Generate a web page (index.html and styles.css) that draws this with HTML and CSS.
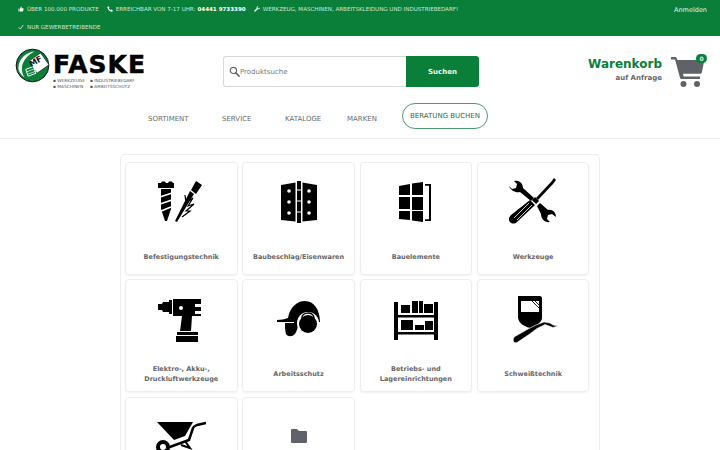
FILE: index.html
```html
<!DOCTYPE html>
<html lang="de">
<head>
<meta charset="utf-8">
<title>Faske</title>
<link rel="stylesheet" href="styles.css">
</head>
<body>
<div class="topbar">
  <div class="usp">
    <span class="usp-item"><svg class="ti" viewBox="0 0 12 12"><path d="M1 5.500h2.200V11H1zM4 5.500 6 1.200c.9 0 1.400.7 1.200 1.600L6.900 4.500h3.200c.8 0 1.200.7 1 1.400l-1 4.200c-.1.500-.5.900-1.100.9H4z"/></svg>ÜBER 100.000 PRODUKTE</span>
    <span class="usp-item"><svg class="ti" viewBox="0 0 12 12"><path d="M1.500 1 4 .8l1 2.800-1.300 1.100a7 7 0 0 0 3.600 3.600L8.400 7l2.800 1 .1 2.500C11 11.200 10 11.500 9 11.300 4.800 10.400 1.600 7.200.8 3 .6 2 .8 1.300 1.500 1z"/></svg>ERREICHBAR VON 7-17 UHR: <b>04441 9733390</b></span>
    <span class="usp-item"><svg class="ti" viewBox="0 0 12 12"><path d="M11.300 3.200 9.500 5 7.500 4.500 7 2.500 8.800.7C7.300.2 5.600 1 5.200 2.500c-.2.600-.1 1.300.1 1.900L.8 8.900c-.6.600-.6 1.500 0 2.100s1.500.6 2.100 0l4.500-4.500c1.900.6 4.200-.6 4.200-2.700 0-.2-.1-.4-.3-.6z"/></svg>WERKZEUG, MASCHINEN, ARBEITSKLEIDUNG UND INDUSTRIEBEDARF!</span>
    <span class="usp-item"><svg class="ti" viewBox="0 0 12 12"><path class="tick" d="M1.500 6.500 4.500 10 10.500 2"/></svg>NUR GEWERBETREIBENDE</span>
  </div>
  <a class="login"><span class="login-dot"></span>Anmelden</a>
</div>

<header class="header">
  <div class="logo">
    <svg class="logo-mark" viewBox="0 0 36 36">
      <circle cx="18" cy="18" r="16.800" fill="#0a7f3a" stroke="#111" stroke-width="1"/>
      <path d="M3.500 20C4 11 11 4.500 20 3.500 13 7 8 13 7 20c0 4 1 8 3 10-4-2-6.500-6-6.500-10z" fill="#fff"/>
      <rect x="17" y="8" width="15" height="15" fill="#fff" stroke="#111" stroke-width=".6" transform="rotate(-35 24.500 15.500)"/>
      <path d="M11 22l8-3 2.500 7-8 3z" fill="none" stroke="#fff" stroke-width="1"/>
      <path d="M12 24.500l8-3M13 27l8-3" stroke="#fff" stroke-width=".7"/>
    </svg>
    <div class="logo-mf">MF</div>
    <div class="logo-text">
      <div class="logo-name">FASKE</div>
      <div class="logo-tags">
        <span>WERKZEUGE</span><span>INDUSTRIEBEDARF</span>
        <span>MASCHINEN</span><span>ARBEITSSCHUTZ</span>
      </div>
    </div>
  </div>
  <form class="search">
    <div class="search-field">
      <svg class="search-icon" viewBox="0 0 12 12"><circle cx="4.800" cy="4.800" r="3.400" fill="none" stroke="#666" stroke-width="1.300"/><path d="M7.500 7.500 11 11" stroke="#666" stroke-width="1.700" stroke-linecap="round"/></svg>
      <span>Produktsuche</span>
    </div>
    <div class="search-btn">Suchen</div>
  </form>
  <div class="cart">
    <div class="cart-text">
      <div class="cart-title">Warenkorb</div>
      <div class="cart-sub">auf Anfrage</div>
    </div>
    <div class="cart-icon">
      <svg viewBox="0 0 36 34"><path d="M1 2h5l1.500 3H33c1 0 1.300.6 1.100 1.500l-2.300 11c-.2.800-.7 1.300-1.600 1.300H13l.6 2.700H30v2.500H11.500c-.8 0-1.300-.4-1.500-1.200L5 4.500H1z" fill="#5f6268"/><circle cx="13.500" cy="29" r="3" fill="#5f6268"/><circle cx="27" cy="29" r="3" fill="#5f6268"/></svg>
      <span class="cart-badge">0</span>
    </div>
  </div>
</header>

<nav class="nav">
  <a class="nav-link n1">SORTIMENT</a>
  <a class="nav-link n2">SERVICE</a>
  <a class="nav-link n3">KATALOGE</a>
  <a class="nav-link n4">MARKEN</a>
  <a class="nav-pill">BERATUNG BUCHEN</a>
</nav>

<main class="panel">
  <div class="grid">
    <a class="card"><svg class="icon" viewBox="0 0 50 50">
      <path d="M2 6h3l1-1.500h3L10 6h2l1-1.500h3L17 6h1v5H2z"/><path d="M5 12h10v20l-4 12H9L5 32z"/><path d="M4 20l12-4M4 27l12-4M5 34l10-4" stroke="#fff" stroke-width="1.600"/>
      <path d="M40 4l6 4-6 9-5-4z"/><path d="M34 14l4 3-17 28-2-1z"/><path d="M29 18l1 8 7-5-5 8 6-2-8 7 4 0-8 6" fill="none" stroke="#000" stroke-width="1.200"/>
    </svg><span class="label">Befestigungstechnik</span></a>

    <a class="card"><svg class="icon" viewBox="0 0 50 50">
      <path d="M7 8l14.500-2.500v39L7 43z"/><path d="M43 8l-14.500-2.500v39L43 43z"/><path d="M23 4h4v42h-4z"/>
      <path d="M23 13h4M23 24h4M23 35h4" stroke="#fff" stroke-width="1.200"/>
      <g fill="#fff"><circle cx="15" cy="14" r="1.800"/><circle cx="15" cy="25" r="1.800"/><circle cx="15" cy="36" r="1.800"/><circle cx="35" cy="14" r="1.800"/><circle cx="35" cy="25" r="1.800"/><circle cx="35" cy="36" r="1.800"/></g>
    </svg><span class="label">Baubeschlag/Eisenwaren</span></a>

    <a class="card"><svg class="icon" viewBox="0 0 50 50">
      <path d="M8 9l11-2v11H8zM21 6.500 32 5v13H21zM8 20h11v12H8zM21 20h11v13H21zM8 34h11v9L8 42zM21 34h11v11l-11-1.500z"/><path d="M34 7h6v37h-6v-1.800h4V8.800h-4z"/>
    </svg><span class="label">Bauelemente</span></a>

    <a class="card"><svg class="icon" viewBox="0 0 50 50">
      <path d="M1 9l3 3 4-1 1-4-3-3c5-1 9 2 9 7l11 10-3 3L12 15C8 16 3 14 1 9z"/><path d="M29 29l3-3 8 7c4-1 8 2 8 7l-4-3-4 1-1 4 3 3c-5 1-9-3-9-8z"/>
      <path d="M46 1l2 2-3 4-15 16-2-2 15-16z"/><path d="M27 20l4 4-3 3-4-4z"/><path d="M22 23l5 5L9 45c-2 2-5 2-7 0s-1-5 1-7z"/><path d="M6 41 21 26M9 43 24 28" stroke="#fff" stroke-width=".8"/>
    </svg><span class="label">Werkzeuge</span></a>

    <a class="card"><svg class="icon" viewBox="0 0 50 50">
      <path d="M2 10h4l1-2h6V6h3v14h-3v-2H7l-1-2H2z"/><path d="M17 5h28v5h-6v3h6v4h-6v3h6v2H36l-1 15H24l2-15h-9z"/><circle cx="25" cy="14" r="2" fill="#fff"/>
      <path d="M21 38h21v3H21z"/><path d="M20 42h22v6H20z"/>
    </svg><span class="label">Elektro-, Akku-,<br>Druckluftwerkzeuge</span></a>

    <a class="card"><svg class="icon" viewBox="0 0 50 50">
      <path d="M3 26c4 0 8-1 11-2C16 13 23 7 31 7c9 0 15 9 15 21H14l-11 0z"/><path d="M11 29h13c0 4-1 8-3 11-3 3-7 3-9 0-1-3-1-7-1-11z"/>
      <circle cx="34" cy="29" r="11" fill="#fff"/><path d="M20 29h3v-3h-3z" fill="#000"/><circle cx="34" cy="30" r="9"/>
      <path d="M28 24c-1-6 12-7 12 0" fill="none" stroke="#000" stroke-width="1.500"/>
    </svg><span class="label">Arbeitsschutz</span></a>

    <a class="card"><svg class="icon" viewBox="0 0 50 50">
      <path d="M3 8h4v38H3zM43 8h4v38h-4z"/><path d="M7 21h36v2.500H7zM7 38h36v2.500H7z"/>
      <path d="M10 11h9v8h-9zM21 7h6v12h-6zM28 7h4v12h-4zM33 10h9v9h-9z"/><path d="M10 26h12v10H10zM24 31h9v5h-9zM34 27h8v9h-8z"/>
    </svg><span class="label">Betriebs- und<br>Lagereinrichtungen</span></a>

    <a class="card"><svg class="icon" viewBox="0 0 50 50">
      <path d="M10 2h22c1 0 2 1 2 2v21c-2 5-7 7-12 9-7-2-11-5-12-10z"/><path d="M13 7h18v11H13z" fill="#fff"/><path d="M24 7l7 7M27 7l4 4" stroke="#000" stroke-width=".9"/>
      <path d="M6 43l14-8 8-4 8-3 6 1 3 2 5 1-5 1.500-8-3-8 4-8 6-12 8c-3 1.500-5-2-3-5z" stroke="#fff" stroke-width=".6"/>
    </svg><span class="label">Schweißtechnik</span></a>

    <a class="card"><svg class="icon" viewBox="0 0 50 50">
      <path d="M1 10h36l-8 14-11 4z"/><path d="M11 36l22-8 4-12c1-2 2-2 4-3l9-2" fill="none" stroke="#000" stroke-width="2.500"/>
      <path d="M29 29l5 7-9-3" fill="none" stroke="#000" stroke-width="2"/>
      <circle cx="7" cy="35" r="5" fill="none" stroke="#000" stroke-width="4"/>
    </svg></a>

    <a class="card"><svg class="folder" viewBox="0 0 16 14"><path d="M0 1c0-.5.5-1 1-1h5l2 2h7c.5 0 1 .5 1 1v10c0 .5-.5 1-1 1H1c-.5 0-1-.5-1-1z"/></svg></a>
  </div>
</main>
</body>
</html>
```
FILE: styles.css
```css
* { box-sizing: border-box; }
html, body { margin: 0; padding: 0; height: 450px; overflow: hidden; }
body { font-family: "DejaVu Sans", sans-serif; background: #fff; color: #666; }

.topbar {
  height: 36px;
  background: #0a7f3a;
  color: #cfe5d8;
  display: flex;
  justify-content: space-between;
  padding: 0 13px 0 18px;
}
.usp { display: flex; flex-wrap: wrap; column-gap: 8px; width: 480px; align-content: flex-start; }
.usp-item { height: 18px; line-height: 17px; font-size: 5.550px; white-space: nowrap; display: flex; align-items: center; }
.usp-item b { margin-left: 2px; color: #fff; }
.ti { width: 6px; height: 6px; margin-right: 3px; fill: #fff; }
.tick { fill: none; stroke: #fff; stroke-width: 1.500; }
.login { font-size: 6.500px; margin-top: 5px; height: 10px; line-height: 10px; display: flex; align-items: center; color: #e6f2ea; }
.login-dot { display: none; }

.header { height: 67px; position: relative; display: flex; padding: 20px 0 0 0; }
.logo { width: 223px; padding: 12px 0 0 15px; display: flex; position: relative; align-self: flex-start; margin-top: -20px; }
.logo-mark { width: 35px; height: 35px; flex: none; }
.logo-mf { position: absolute; left: 29px; top: 21px; font-size: 8px; font-weight: 700; color: #111; transform: rotate(-30deg); }
.logo-text { margin: 5px 0 0 3px; }
.logo-name { font-weight: 700; font-size: 25px; line-height: 23px; color: #000; letter-spacing: 1px; -webkit-text-stroke: .5px #000; }
.logo-tags { display: grid; grid-template-columns: 37px auto; font-size: 4.300px; line-height: 6px; color: #555; margin-top: 2px; white-space: nowrap; }
.logo-tags span::before { content: "▪ "; }

.search { display: flex; width: 256px; height: 31px; }
.search-field { width: 183px; border: 1px solid #d9d9d9; border-right: 0; border-radius: 3px 0 0 3px; display: flex; align-items: center; padding-left: 5px; font-size: 7px; color: #777; }
.search-icon { width: 11px; height: 11px; margin-right: 0; }
.search-btn { width: 73px; background: #0a7f3a; color: #f2f8f4; font-size: 7px; font-weight: 700; display: flex; align-items: center; justify-content: center; border-radius: 0 3px 3px 0; }

.cart { margin-left: auto; display: flex; padding-right: 14px; align-self: flex-start; margin-top: -1px; }
.cart-text { text-align: right; padding-top: 1px; margin-right: 8px; }
.cart-title { font-size: 12px; font-weight: 700; color: #0a7f3a; line-height: 16px; }
.cart-sub { font-size: 7px; font-weight: 700; color: #666; line-height: 11px; margin-top: 1px; }
.cart-icon { width: 36px; height: 34px; position: relative; }
.cart-icon svg { display: block; width: 36px; height: 34px; }
.cart-badge { position: absolute; right: -1px; top: -1px; width: 11px; height: 9px; border-radius: 5px; background: #0a7f3a; color: #dfeee5; font-size: 6px; font-weight: 700; line-height: 9px; text-align: center; }

.nav { height: 36px; border-bottom: 1px solid #ececec; display: flex; align-items: flex-start; padding-left: 148px; font-size: 7px; color: #6b6b6b; }
.nav-link { margin-top: 11px; line-height: 10px; }
.n1 { width: 74px; }
.n2 { width: 63px; }
.n3 { width: 62px; }
.n4 { width: 55px; }
.nav-pill { height: 26px; width: 86px; border: 1px solid #4d9a74; border-radius: 13px; color: #24704a; display: flex; align-items: center; justify-content: center; margin-top: 0; white-space: nowrap; }

.panel { margin: 15px 120px 0; border: 1px solid #eeeeee; border-bottom: 0; border-radius: 5px 5px 0 0; padding: 7px 10px 0 4px; height: 296px; overflow: hidden; }
.grid { display: grid; grid-template-columns: repeat(4, 112.500px); column-gap: 4.800px; row-gap: 4.900px; }
.card { height: 112.500px; border: 1px solid #eeeeee; border-radius: 4px; box-shadow: 0 1px 2px rgba(0,0,0,.06); display: flex; flex-direction: column; align-items: center; position: relative; }
.icon { width: 50px; height: 50px; margin-top: 14px; flex: none; }
.folder { width: 16px; height: 14px; margin-top: 31px; flex: none; fill: #5f6268; }
.label { position: absolute; left: 0; right: 0; top: 78px; height: 32px; display: flex; align-items: center; justify-content: center; text-align: center; font-size: 6.500px; line-height: 10px; font-weight: 700; color: #666; }
```
